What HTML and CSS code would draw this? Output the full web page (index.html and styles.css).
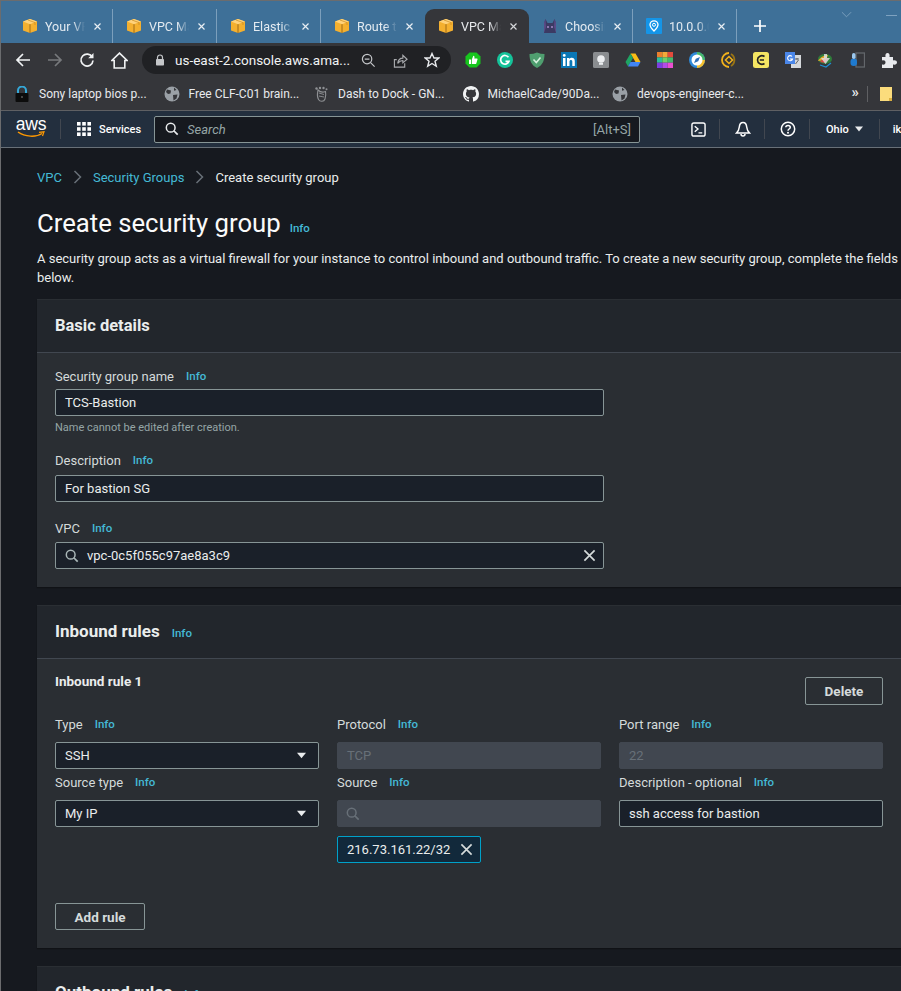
FILE: index.html
```html
<!DOCTYPE html>
<html lang="en">
<head>
<meta charset="utf-8">
<title>Create security group</title>
<link rel="stylesheet" href="styles.css">
</head>
<body>
<div class="window">
  <svg class="defs" width="0" height="0"><defs>
    <g id="box"><path d="M8 1 15 3.6V12.4L8 15 1 12.4V3.6Z" fill="#f4b02f"/><path d="M8 6.2 15 3.6 8 1 1 3.6Z" fill="#ffd27a"/><path d="M8 6.2V15" stroke="#8a5a12" stroke-width=".8"/><path d="M6 2 13 4.6V7" stroke="#c98a1e" stroke-width=".7" fill="none"/></g>
    <g id="tabx"><path d="M2 2 10 10M10 2 2 10" stroke="#e8eef3" stroke-width="1.6" fill="none"/></g>
    <g id="globe"><circle cx="8" cy="8" r="7.5" fill="#9aa0a6"/><path d="M3 3.5 7 4.5 6.5 7.5 4 8 2 6ZM9 9 13.5 8.5 12.5 12.5 9.5 14.5ZM10 1.5 12.5 4 10 4.8Z" fill="#35363a"/></g>
    <g id="caret"><path d="M0 0H11L5.5 7Z" fill="#e9ebed"/></g>
    <g id="search"><circle cx="6.5" cy="6.5" r="5" fill="none" stroke-width="1.7"/><path d="M10 10 14.5 14.5" stroke-width="2" fill="none"/></g>
    <g id="closex"><path d="M1.5 1.5 12.5 12.5M12.5 1.5 1.5 12.5" stroke="#d5dbdb" stroke-width="1.8" fill="none"/></g>
  </defs></svg>

  <div class="tabstrip">
    <div class="tab"><svg class="tabicon" viewBox="0 0 16 16"><use href="#box"/></svg><span class="tabtitle">Your VP</span><svg class="tabclose" viewBox="0 0 12 12"><use href="#tabx"/></svg></div>
    <div class="tab"><svg class="tabicon" viewBox="0 0 16 16"><use href="#box"/></svg><span class="tabtitle">VPC Ma</span><svg class="tabclose" viewBox="0 0 12 12"><use href="#tabx"/></svg></div>
    <div class="tab"><svg class="tabicon" viewBox="0 0 16 16"><use href="#box"/></svg><span class="tabtitle">Elastic I</span><svg class="tabclose" viewBox="0 0 12 12"><use href="#tabx"/></svg></div>
    <div class="tab tab-prelast"><svg class="tabicon" viewBox="0 0 16 16"><use href="#box"/></svg><span class="tabtitle">Route t</span><svg class="tabclose" viewBox="0 0 12 12"><use href="#tabx"/></svg></div>
    <div class="tab tab-active"><svg class="tabicon" viewBox="0 0 16 16"><use href="#box"/></svg><span class="tabtitle">VPC Ma</span><svg class="tabclose" viewBox="0 0 12 12"><path d="M2 2 10 10M10 2 2 10" stroke="#d5d7da" stroke-width="1.6" fill="none"/></svg></div>
    <div class="tab"><svg class="tabicon" viewBox="0 0 16 16"><path d="M2 15V5L3.5 1 5.5 5H10.5L12.5 1 14 5V15Z" fill="#3b3a63"/><path d="M2 15V5L3.5 1 4 9ZM14 15V5L12.5 1 12 9Z" fill="#5a4a86"/><circle cx="6" cy="9" r="1" fill="#a78bc9"/><circle cx="10" cy="9" r="1" fill="#a78bc9"/></svg><span class="tabtitle">Choosir</span><svg class="tabclose" viewBox="0 0 12 12"><use href="#tabx"/></svg></div>
    <div class="tab"><svg class="tabicon" viewBox="0 0 16 16"><rect width="16" height="16" rx="1" fill="#1495e8"/><path d="M8 13C5.5 10.5 4 8.8 4 6.8A4 4 0 0 1 12 6.8C12 8.8 10.500 10.500 8 13Z" fill="none" stroke="#fff" stroke-width="1.300"/><circle cx="8" cy="6.800" r="1.500" fill="none" stroke="#fff"/></svg><span class="tabtitle">10.0.0.0</span><svg class="tabclose" viewBox="0 0 12 12"><use href="#tabx"/></svg></div>
    <svg class="newtab" viewBox="0 0 12 12"><path d="M6 0V12M0 6H12" stroke="#fff" stroke-width="1.700"/></svg>
    <svg class="winchevron" viewBox="0 0 12 7"><path d="M1 1 6 6 11 1" stroke="#7ea2c0" fill="none"/></svg>
    <span class="winmin"></span>
  </div>

  <div class="toolbar">
    <div class="navbtns">
      <svg class="navbtn" viewBox="0 0 16 16"><path d="M15 8H2M8 2 2 8 8 14" stroke="#f1f3f4" stroke-width="1.700" fill="none"/></svg>
      <svg class="navbtn" viewBox="0 0 16 16"><path d="M1 8H14M8 2 14 8 8 14" stroke="#77797c" stroke-width="1.700" fill="none"/></svg>
      <svg class="navbtn" viewBox="0 0 16 16"><path d="M13.300 5.200A6 6 0 1 0 14 8.500" stroke="#f1f3f4" stroke-width="1.700" fill="none"/><path d="M14.500 1V6.300H9.200Z" fill="#f1f3f4"/></svg>
      <svg class="navbtn navbtn-home" viewBox="0 0 16 16"><path d="M8 1 .8 8H3V15H13V8H15.200Z" stroke="#f1f3f4" stroke-width="1.500" fill="none"/></svg>
    </div>
    <div class="omnibox">
      <svg class="lock" viewBox="0 0 10 12"><path d="M2.500 5V3.500A2.500 2.500 0 0 1 7.500 3.500V5" stroke="#c4c6c9" stroke-width="1.200" fill="none"/><rect x="1" y="5" width="8" height="6.500" rx=".8" fill="#c4c6c9"/></svg>
      <span class="url">us-east-2.console.aws.ama...</span>
      <svg class="omniicon omni-zoom" viewBox="0 0 16 16"><circle cx="6.500" cy="6.500" r="5" stroke="#c4c6c9" stroke-width="1.300" fill="none"/><path d="M10.200 10.200 14.500 14.500M4 6.500H9" stroke="#c4c6c9" stroke-width="1.300" fill="none"/></svg>
      <svg class="omniicon omni-share" viewBox="0 0 16 16"><path d="M4 7H1.500V15H12.500V11" stroke="#a9abae" stroke-width="1.200" fill="none"/><path d="M5 11C5.500 7.500 8 5.500 10.500 5.500V2.500L15 6.700 10.500 10.500V8C8 8 6.500 9 5 11Z" stroke="#a9abae" stroke-width="1.200" fill="none"/></svg>
      <svg class="omniicon omni-star" viewBox="0 0 16 16"><path d="M8 1.500 10 6H14.800L11 9.300 12.300 14.300 8 11.500 3.700 14.300 5 9.300 1.200 6H6Z" stroke="#e8eaed" stroke-width="1.400" fill="none"/></svg>
    </div>
    <div class="extensions">
      <svg class="ext" viewBox="0 0 16 16"><path d="M4.500.5H11.500L15.500 4.500V11.500L11.500 15.500H4.500L.5 11.500V4.500Z" fill="#17c51d"/><path d="M4 7.500H6V12H4ZM6.800 7.500 8.300 3.800C9.500 3.800 9.800 5 9.300 6.500H12C12.700 6.500 12.700 7.500 12.300 8L11.300 11.500C11 12 10.800 12 10.300 12H6.800Z" fill="#fff"/></svg>
      <svg class="ext" viewBox="0 0 16 16"><circle cx="8" cy="8" r="8" fill="#15c39a"/><path d="M11.500 5.300A4.300 4.300 0 1 0 12 9.300H8.500" stroke="#fff" stroke-width="1.700" fill="none"/></svg>
      <svg class="ext" viewBox="0 0 16 16"><path d="M8 .5C10.500 1.500 13 2 15.500 2 15.500 8 14 13 8 16 2 13 .5 8 .5 2 3 2 5.500 1.500 8 .5Z" fill="#4f9e6f"/><path d="M4.500 7.500 7.300 10.500 11.500 5.500" stroke="#d7f0df" stroke-width="1.600" fill="none"/></svg>
      <svg class="ext" viewBox="0 0 16 16"><rect width="16" height="16" fill="#0a77b5"/><path d="M2 6H4.500V14H2ZM6 6H8.300V7.200C9.800 5 13.800 5.300 13.800 9V14H11.300V9.500C11.300 7.500 8.500 7.500 8.500 9.500V14H6Z" fill="#fff"/><circle cx="3.250" cy="3.400" r="1.400" fill="#fff"/></svg>
      <svg class="ext" viewBox="0 0 16 16"><rect width="16" height="16" rx="1.500" fill="#8a8d90"/><circle cx="8" cy="7" r="3.800" fill="#eceef0"/><rect x="6" y="10.800" width="4" height="2" fill="#eceef0"/></svg>
      <svg class="ext" viewBox="0 0 16 16"><path d="M5.500 1.500H10.500L15.500 10H10.500Z" fill="#f9bc15"/><path d="M5.500 1.500 .5 10 3 14.500 8 6Z" fill="#1fa463"/><path d="M3 14.500H13L15.500 10H5.500Z" fill="#4285f4"/></svg>
      <svg class="ext" viewBox="0 0 16 16"><rect width="5.400" height="5.400" fill="#ea7f2d"/><rect x="5.400" width="5.300" height="5.400" fill="#f4a93a"/><rect x="10.700" width="5.300" height="5.400" fill="#e34b3b"/><rect y="5.400" width="5.400" height="5.300" fill="#2dbf9a"/><rect x="5.400" y="5.400" width="5.300" height="5.300" fill="#6fd16a"/><rect x="10.700" y="5.400" width="5.300" height="5.300" fill="#43b96b"/><rect y="10.700" width="5.400" height="5.300" fill="#7d3fe0"/><rect x="5.400" y="10.700" width="5.300" height="5.300" fill="#b24be8"/><rect x="10.700" y="10.700" width="5.300" height="5.300" fill="#ea4fd0"/></svg>
      <svg class="ext" viewBox="0 0 16 16"><circle cx="8" cy="8" r="8" fill="#2f8ad8"/><path d="M8 0A8 8 0 0 1 16 8H8Z" fill="#49b86c"/><path d="M16 8A8 8 0 0 1 8 16V8Z" fill="#f6c02c"/><circle cx="8" cy="8" r="5.500" fill="#fff"/><path d="M11 5 9.200 9.200 5 11 6.800 6.800Z" fill="#2f6fb5"/></svg>
      <svg class="ext" viewBox="0 0 16 16"><path d="M8 1A7 7 0 0 0 8 15" stroke="#f2b21c" stroke-width="1.800" fill="none"/><path d="M10 2A7 7 0 0 1 10 14" stroke="#9a7414" stroke-width="1.800" fill="none"/><path d="M8 4.500 11.500 8 8 11.500 4.500 8Z" fill="none" stroke="#f2b21c" stroke-width="1.500"/></svg>
      <svg class="ext" viewBox="0 0 16 16"><rect width="16" height="16" rx="2.500" fill="#f5e663"/><path d="M11.500 4.500C8.500 2.500 4.500 4.500 4.500 8S8.500 13.500 11.500 11.500M6.800 8H11" stroke="#222" stroke-width="1.600" fill="none"/></svg>
      <svg class="ext" viewBox="0 0 16 16"><rect x="6" y="3" width="10" height="13" fill="#d5d8db"/><rect width="10" height="12" fill="#4a86e8"/><path d="M7 4.500A2.500 2.500 0 1 0 7.500 7H5" stroke="#fff" stroke-width="1.100" fill="none"/><path d="M10 7H14M12 6V7.500M10.500 12 13.500 8" stroke="#555" stroke-width=".9" fill="none"/></svg>
      <svg class="ext" viewBox="0 0 16 16"><ellipse cx="8" cy="7" rx="7" ry="5" fill="#2f7e3a"/><path d="M1 9C3 5 8 3 11 3L9 8Z" fill="#e5a72b"/><path d="M3 10C5 7 9 6 12 6L8 11Z" fill="#d9473f"/><path d="M7 2H10V6H13L8.500 12 4 6H7Z" fill="#dfe6ea" opacity=".8"/><path d="M3 13 9 15 14 11" stroke="#1f8fd0" stroke-width="1.200" fill="none"/></svg>
      <svg class="ext" viewBox="0 0 16 16"><rect x="7" y="1" width="8.500" height="14" fill="none" stroke="#63676b" stroke-width="1.300"/><rect x="1.500" y="6.500" width="6.500" height="7.500" rx="3" fill="#1f7bd0"/><rect x="3" y="1" width="3.500" height="6" rx="1.700" fill="#9cc8ee"/></svg>
      <svg class="ext" viewBox="0 0 16 16"><path d="M1 5H4.500C4 2.500 5 1 6.500 1S9 2.500 8.500 5H12V8.500C14.500 8 16 9 16 10.500S14.500 13 12 12.500V16H1V12.500C3.500 13 4.500 12 4.500 10.500S3.500 8 1 8.500Z" fill="#e8eaed"/></svg>
    </div>
  </div>

  <div class="bookmarks">
    <div class="bm"><svg class="bmicon" viewBox="0 0 16 16"><path d="M4 7V4.500A4 4 0 0 1 12 4.500V7" stroke="#35a8d8" stroke-width="2" fill="none"/><rect x="1.500" y="7" width="13" height="9" rx="1" fill="#0c0c0c"/><circle cx="8" cy="11" r="1.100" fill="#555"/></svg><span>Sony laptop bios p...</span></div>
    <div class="bm"><svg class="bmicon" viewBox="0 0 16 16"><use href="#globe"/></svg><span>Free CLF-C01 brain...</span></div>
    <div class="bm"><svg class="bmicon" viewBox="0 0 16 16"><path d="M5 4C4.500 7 3.500 10 5.500 13.500 7 16 11 16 12 13 13 10 13 8 12.500 5.500 10 6.500 7 6 5 4Z" fill="none" stroke="#8f9194" stroke-width="1.100"/><path d="M6 7 11 8.500M5.800 10 11 11" stroke="#8f9194" stroke-width=".9"/><circle cx="3.500" cy="2.500" r="1.200" fill="#8f9194"/><circle cx="7" cy="2" r="1.200" fill="#8f9194"/><circle cx="10.500" cy="2" r="1.200" fill="#8f9194"/><circle cx="13.500" cy="3.300" r="1" fill="#8f9194"/></svg><span>Dash to Dock - GN...</span></div>
    <div class="bm"><svg class="bmicon" viewBox="0 0 16 16"><path fill="#f1f3f4" d="M8 0C3.580 0 0 3.580 0 8c0 3.540 2.290 6.530 5.470 7.590.4.070.55-.17.55-.38 0-.19-.01-.82-.01-1.490-2.010.37-2.530-.49-2.690-.94-.09-.23-.48-.94-.82-1.130-.28-.15-.68-.52-.01-.53.63-.01 1.080.58 1.230.82.720 1.210 1.870.87 2.330.66.070-.52.280-.87.510-1.070-1.780-.2-3.640-.89-3.640-3.950 0-.87.310-1.590.82-2.150-.08-.2-.36-1.020.08-2.120 0 0 .67-.21 2.200.82.640-.18 1.320-.27 2-.27s1.360.09 2 .27c1.530-1.040 2.200-.82 2.200-.82.440 1.100.16 1.920.08 2.120.51.560.82 1.270.82 2.150 0 3.070-1.870 3.750-3.650 3.950.29.250.54.730.54 1.480 0 1.070-.01 1.930-.01 2.200 0 .21.150.46.550.38A8.010 8.010 0 0 0 16 8c0-4.420-3.580-8-8-8z"/></svg><span>MichaelCade/90Da...</span></div>
    <div class="bm"><svg class="bmicon" viewBox="0 0 16 16"><use href="#globe"/></svg><span>devops-engineer-c...</span></div>
    <div class="bm-end">
      <span class="bm-more">»</span>
      <span class="bm-sep"></span>
      <svg class="bm-folder" viewBox="0 0 12 14"><path d="M0 0H12V14H0Z" fill="#fbdc7c"/><path d="M9 11H12V14H9Z" fill="#d9ae3f"/></svg>
    </div>
  </div>

  <header class="awsnav">
    <div class="awslogo"><span class="awstext">aws</span><svg class="awssmile" viewBox="0 0 28 7"><path d="M1 1C8 6 19 6.500 25 2.500" stroke="#ff9900" stroke-width="1.500" fill="none"/><path d="M22 1.300 27 .8 25.500 5" stroke="#ff9900" stroke-width="1.200" fill="none"/></svg></div>
    <span class="navsep navsep-logo"></span>
    <svg class="gridicon" viewBox="0 0 14 14"><g fill="#fff"><rect width="3.600" height="3.600"/><rect x="5.200" width="3.600" height="3.600"/><rect x="10.400" width="3.600" height="3.600"/><rect y="5.200" width="3.600" height="3.600"/><rect x="5.200" y="5.200" width="3.600" height="3.600"/><rect x="10.400" y="5.200" width="3.600" height="3.600"/><rect y="10.400" width="3.600" height="3.600"/><rect x="5.200" y="10.400" width="3.600" height="3.600"/><rect x="10.400" y="10.400" width="3.600" height="3.600"/></g></svg>
    <span class="services">Services</span>
    <div class="navsearch">
      <svg class="navsearchicon" viewBox="0 0 16 16"><use href="#search" stroke="#e9ebed"/></svg>
      <span class="navsearchtext">Search</span>
      <span class="navshortcut">[Alt+S]</span>
    </div>
    <svg class="navicon navicon-term" viewBox="0 0 16 16"><rect x="1" y="1" width="14" height="14" rx="2" fill="none" stroke="#fff" stroke-width="1.500"/><path d="M4 4.500 7.500 7.500 4 10.500M8 11.500H12" stroke="#fff" stroke-width="1.400" fill="none"/></svg>
    <span class="navsep navsep-a"></span>
    <svg class="navicon navicon-bell" viewBox="0 0 16 16"><path d="M8 1.500C5.500 1.500 4.500 3.500 4.300 6 4 9 3 10.500 1.500 12H14.500C13 10.500 12 9 11.700 6 11.500 3.500 10.500 1.500 8 1.500Z" fill="none" stroke="#fff" stroke-width="1.500"/><path d="M6 13A2 2 0 0 0 10 13" fill="none" stroke="#fff" stroke-width="1.500"/></svg>
    <span class="navsep navsep-b"></span>
    <svg class="navicon navicon-help" viewBox="0 0 16 16"><circle cx="8" cy="8" r="6.700" fill="none" stroke="#fff" stroke-width="1.500"/><path d="M5.800 6.300C5.800 3.800 10.300 3.800 10.300 6.300 10.300 8 8 8 8 9.700" fill="none" stroke="#fff" stroke-width="1.500"/><circle cx="8" cy="11.800" r="1" fill="#fff"/></svg>
    <span class="navsep navsep-c"></span>
    <span class="region">Ohio</span>
    <svg class="regioncaret" viewBox="0 0 11 7"><use href="#caret"/></svg>
    <span class="navsep navsep-d"></span>
    <span class="account">ik</span>
  </header>

  <main class="content">
    <nav class="crumbs">
      <a class="link">VPC</a>
      <svg class="crumbsep" viewBox="0 0 8 14"><path d="M1 1 7 7 1 13" stroke="#687078" stroke-width="1.500" fill="none"/></svg>
      <a class="link">Security Groups</a>
      <svg class="crumbsep" viewBox="0 0 8 14"><path d="M1 1 7 7 1 13" stroke="#687078" stroke-width="1.500" fill="none"/></svg>
      <span class="crumb-current">Create security group</span>
    </nav>
    <div class="titlerow"><h1 class="title">Create security group</h1><a class="info info-title">Info</a></div>
    <p class="intro">A security group acts as a virtual firewall for your instance to control inbound and outbound traffic. To create a new security group, complete the fields below.</p>

    <section class="panel">
      <h2 class="panelhead">Basic details</h2>
      <div class="panelbody panelbody-basic">
        <div class="field field-name">
          <div class="label"><span>Security group name</span><a class="info">Info</a></div>
          <div class="input">TCS-Bastion</div>
          <div class="help">Name cannot be edited after creation.</div>
        </div>
        <div class="field field-desc">
          <div class="label"><span>Description</span><a class="info">Info</a></div>
          <div class="input">For bastion SG</div>
        </div>
        <div class="field field-vpc">
          <div class="label"><span>VPC</span><a class="info">Info</a></div>
          <div class="input input-vpc">
            <svg class="inputsearch" viewBox="0 0 16 16"><use href="#search" stroke="#aab7b8"/></svg>
            <span class="grow">vpc-0c5f055c97ae8a3c9</span>
            <svg class="clear" viewBox="0 0 14 14"><use href="#closex"/></svg>
          </div>
        </div>
      </div>
    </section>

    <section class="panel">
      <h2 class="panelhead panelhead-inbound"><span>Inbound rules</span><a class="info">Info</a></h2>
      <div class="panelbody panelbody-rules">
        <div class="rulehead"><h3 class="ruletitle">Inbound rule 1</h3><button class="btn btn-delete">Delete</button></div>
        <div class="rulegrid">
          <div class="rulefield">
            <div class="label"><span>Type</span><a class="info">Info</a></div>
            <div class="input input-select"><span class="grow">SSH</span><svg class="selectcaret" viewBox="0 0 11 7"><use href="#caret"/></svg></div>
          </div>
          <div class="rulefield">
            <div class="label"><span>Protocol</span><a class="info">Info</a></div>
            <div class="input input-disabled">TCP</div>
          </div>
          <div class="rulefield">
            <div class="label"><span>Port range</span><a class="info">Info</a></div>
            <div class="input input-disabled">22</div>
          </div>
          <div class="rulefield">
            <div class="label"><span>Source type</span><a class="info">Info</a></div>
            <div class="input input-select"><span class="grow">My IP</span><svg class="selectcaret" viewBox="0 0 11 7"><use href="#caret"/></svg></div>
          </div>
          <div class="rulefield">
            <div class="label"><span>Source</span><a class="info">Info</a></div>
            <div class="input input-disabled"><svg class="inputsearch" viewBox="0 0 16 16"><use href="#search" stroke="#687078"/></svg></div>
            <div class="token"><span>216.73.161.22/32</span><svg class="tokenx" viewBox="0 0 14 14"><use href="#closex"/></svg></div>
          </div>
          <div class="rulefield">
            <div class="label"><span>Description - optional</span><a class="info">Info</a></div>
            <div class="input">ssh access for bastion</div>
          </div>
        </div>
        <button class="btn btn-add">Add rule</button>
      </div>
    </section>

    <section class="panel">
      <h2 class="panelhead panelhead-inbound"><span>Outbound rules</span><a class="info">Info</a></h2>
    </section>
  </main>
</div>
</body>
</html>
```
FILE: styles.css
```css
* { box-sizing: border-box; }
html, body { margin: 0; padding: 0; height: 991px; overflow: hidden; background: #16191f; }
body { font-family: Roboto, "Noto Sans", sans-serif; }
.defs { position: absolute; }
.window { width: 901px; height: 991px; overflow: hidden; border-left: 1px solid #6b6c6e; border-top: 1px solid #6b6c6e; }

/* Tabs */
.tabstrip { display: flex; align-items: flex-start; height: 42px; background: #3e7098; padding: 8px 0 0 8px; position: relative; }
.tab { width: 104px; height: 34px; flex: none; display: flex; align-items: center; padding: 0 10px 0 13px; color: #e4ebf1; font-size: 12.5px; border-right: 1px solid #7c9fbc; background-clip: padding-box; }
.tab-prelast { border-right-color: transparent; }
.tab-active { background: #35363a; color: #e8eaed; border-right-color: transparent; border-radius: 9px 9px 0 0; }
.tabicon { width: 16px; height: 16px; flex: none; margin-right: 7px; }
.tabtitle { flex: 1; min-width: 0; white-space: nowrap; -webkit-mask-image: linear-gradient(90deg, #000 70%, transparent 100%); mask-image: linear-gradient(90deg, #000 70%, transparent 100%); }
.tabclose { width: 9px; height: 9px; flex: none; margin-left: 8px; }
.newtab { width: 12px; height: 12px; margin: 11px 0 0 17px; flex: none; }
.winchevron { position: absolute; left: 840px; top: 10px; width: 11px; height: 7px; }
.winmin { position: absolute; left: 885px; top: 14px; width: 11px; height: 1px; background: #7ea2c0; }

/* Toolbar */
.toolbar { display: flex; align-items: center; height: 34px; background: #35363a; padding-left: 6px; }
.navbtns { display: flex; gap: 16px; width: 135px; flex: none; align-items: center; }
.navbtn { width: 16px; height: 16px; flex: none; margin-left: 8px; }
.navbtn + .navbtn { margin-left: 0; }
.navbtn-home { width: 17px; height: 17px; }
.omnibox { width: 309px; height: 28px; flex: none; background: #202124; border-radius: 14px; display: flex; align-items: center; padding-left: 13px; color: #f1f3f4; font-size: 13.5px; }
.lock { width: 10px; height: 12px; flex: none; margin-right: 10px; }
.url { width: 180px; white-space: nowrap; flex: none; }
.omniicon { width: 15px; height: 15px; flex: none; }
.omni-zoom { margin-left: 6px; }
.omni-share { margin-left: 17px; }
.omni-star { margin-left: 16px; width: 16px; height: 16px; }
.extensions { display: flex; gap: 16px; margin-left: 14px; flex: none; align-items: center; }
.ext { width: 16px; height: 16px; flex: none; }

/* Bookmarks */
.bookmarks { display: flex; align-items: center; height: 34px; background: #35363a; border-bottom: 1px solid #5f6063; padding-left: 13px; color: #e8eaed; font-size: 12px; position: relative; }
.bm { display: flex; align-items: center; gap: 9px; width: 149.500px; flex: none; white-space: nowrap; }
.bmicon { width: 16px; height: 16px; flex: none; }
.bm-end { display: flex; align-items: center; margin-left: auto; padding-right: 9px; flex: none; }
.bm-more { font-size: 15px; font-weight: 600; color: #e8eaed; line-height: 16px; margin-top: -3px; }
.bm-sep { width: 1px; height: 16px; background: #5f6063; margin: 0 12px 0 8px; }
.bm-folder { width: 12px; height: 14px; }

/* AWS nav */
.awsnav { display: flex; align-items: center; height: 37px; background: #232f3e; border-bottom: 1px solid #687078; color: #fff; font-size: 12px; padding-left: 16px; }
.awslogo { width: 28px; flex: none; display: flex; flex-direction: column; align-items: center; margin-top: -3px; }
.awstext { font-family: "Liberation Sans", sans-serif; font-size: 17.500px; line-height: 12px; letter-spacing: -.2px; }
.awssmile { width: 28px; height: 7px; margin-top: 1px; }
.navsep { width: 1px; height: 20px; background: #414750; flex: none; }
.navsep-logo { margin-left: 15px; }
.gridicon { width: 14px; height: 14px; flex: none; margin-left: 16px; }
.services { font-weight: 500; font-size: 11px; margin-left: 8px; width: 47px; flex: none; }
.navsearch { width: 486px; height: 27px; flex: none; margin-left: 8px; border: 1px solid #879596; border-radius: 2px; background: #16191f; display: flex; align-items: center; padding: 0 8px 0 10px; }
.navsearchicon { width: 14px; height: 14px; flex: none; }
.navsearchtext { font-style: italic; font-size: 13px; color: #95a5a6; margin-left: 8px; flex: 1; }
.navshortcut { color: #95a5a6; font-size: 13px; }
.navicon { width: 16px; height: 16px; flex: none; }
.navicon-term { margin-left: 51px; width: 15px; height: 15px; }
.navsep-a { margin-left: 13px; }
.navicon-bell { margin-left: 15px; }
.navsep-b { margin-left: 13px; }
.navicon-help { margin-left: 15px; }
.navsep-c { margin-left: 13px; }
.region { margin-left: 16px; font-weight: 500; font-size: 11px; }
.regioncaret { width: 8px; height: 6px; margin-left: 6px; flex: none; }
.navsep-d { margin-left: 16px; }
.account { margin-left: 13px; font-weight: 500; font-size: 11px; }

/* Content */
.content { width: 960px; padding: 18px 0 0 36px; }
.crumbs { display: flex; align-items: center; height: 22px; font-size: 13px; color: #d5dbdb; }
.link { color: #44b9d6; }
.crumbsep { width: 9px; height: 14px; margin: 0 11px; flex: none; }
.crumb-current { color: #eaeded; }
.titlerow { display: flex; align-items: baseline; margin-top: 17px; height: 36px; }
.title { margin: 0; font-size: 25.700px; font-weight: 400; color: #fafafa; line-height: 36px; }
.info { color: #44b9d6; font-size: 11.500px; font-weight: 500; margin-left: 12px; }
.info-title { margin-left: 9px; }
.intro { margin: 8px 0 0; width: 870px; color: #eaeded; font-size: 13px; line-height: 19px; }

.panel { margin-top: 12px; background: #2a2e33; box-shadow: 0 1px 1px #101216; }
.panel + .panel { margin-top: 18px; }
.panelhead { margin: 0; height: 54px; background: #22262c; border-top: 1px solid #2a2e33; border-bottom: 1px solid #414750; padding: 0 0 2px 18px; display: flex; align-items: center; color: #eaeded; font-size: 16.500px; font-weight: 700; }
.panelhead-inbound { font-size: 17px; }
.panelhead-inbound .info { margin-left: 12px; margin-top: 3px; }
.panelbody { padding: 0 18px; }
.panelbody-basic { padding-top: 13px; height: 234px; }

.label { display: flex; align-items: center; height: 20px; color: #d5dbdb; font-size: 13px; }
.input { height: 27px; border: 1px solid #879596; border-radius: 2px; background: #1a2029; color: #eaeded; font-size: 13px; display: flex; align-items: center; padding: 0 9px; }
.field { width: 549px; }
.field-name .input { margin-top: 3px; }
.help { height: 16px; margin-top: 4px; font-size: 11px; line-height: 16px; color: #95a5a6; }
.field-desc { margin-top: 14px; }
.field-desc .input { margin-top: 5px; }
.field-vpc { margin-top: 16px; }
.field-vpc .input { margin-top: 4px; }
.input-vpc { padding: 0 7px 0 9px; }
.inputsearch { width: 14px; height: 14px; flex: none; margin-right: 8px; }
.grow { flex: 1; }
.clear { width: 13px; height: 13px; flex: none; }

.panelbody-rules { height: 289px; padding-top: 18px; }
.rulehead { display: flex; justify-content: space-between; align-items: flex-start; height: 38px; width: 828px; }
.ruletitle { margin: 0; font-size: 13.500px; font-weight: 700; color: #eaeded; line-height: 16px; margin-top: -4px; }
.btn { background: transparent; border: 1px solid #879596; border-radius: 2px; color: #d5dbdb; font-family: inherit; font-weight: 700; font-size: 13.500px; height: 28px; padding: 0; }
.btn-delete { width: 78px; }
.btn-add { width: 90px; height: 27px; margin-top: 21px; display: block; }
.rulegrid { display: grid; grid-template-columns: repeat(3, 264px); column-gap: 18px; row-gap: 3px; align-items: start; align-content: start; height: 168px; margin-top: -1px; }
.rulefield .label + .input { margin-top: 8px; }
.input-select { padding-right: 12px; }
.selectcaret { width: 9px; height: 7px; flex: none; }
.input-disabled { background: #414750; border-color: #414750; color: #687078; }
.input-disabled .inputsearch { margin-left: -1px; }
.rulefield .token { width: 144px; height: 27px; margin-top: 9px; border: 1px solid #00a1c9; border-radius: 2px; background: #12293b; color: #eaeded; font-size: 13px; display: flex; align-items: center; justify-content: space-between; padding: 0 7px 0 9px; }
.tokenx { width: 13px; height: 13px; flex: none; }
```
